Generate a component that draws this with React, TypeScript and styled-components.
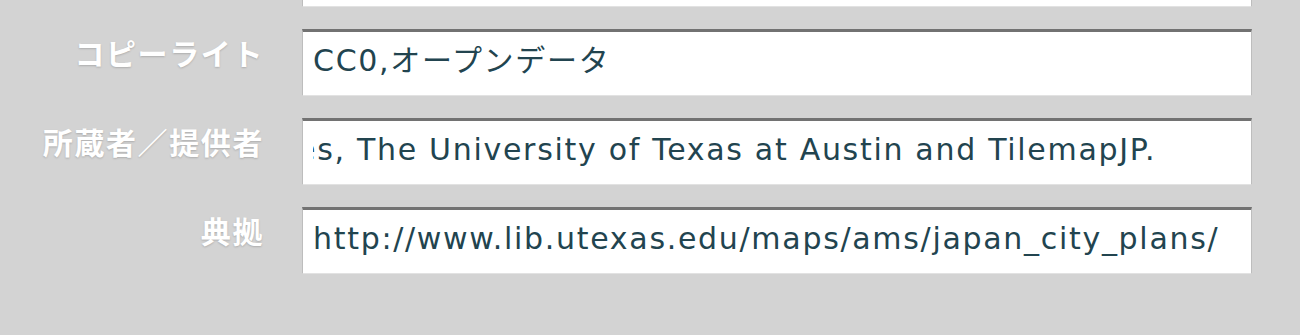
import React from "react";
import styled, { createGlobalStyle } from "styled-components";

const GlobalStyle = createGlobalStyle`
  html, body {
    margin: 0;
    padding: 0;
    background: #d3d3d3;
    overflow: hidden;
  }
  #root {
    width: 1300px;
    height: 335px;
    overflow: hidden;
  }
`;

const Page = styled.div`
  width: 1300px;
  height: 335px;
  background: #d3d3d3;
  overflow: hidden;
`;

const Form = styled.div`
  display: grid;
  grid-template-columns: 264px 950px;
  column-gap: 38px;
  row-gap: 22px;
  margin-top: -60px;
`;

const Label = styled.div`
  text-align: right;
  padding-top: 8px;
  font-family: "Noto Sans CJK JP", "Noto Sans", sans-serif;
  font-weight: 700;
  font-size: 30px;
  line-height: 30px;
  letter-spacing: 1.6px;
  color: #ffffff;
  text-shadow: 0 1px 2px rgba(0, 0, 0, 0.18);
  white-space: nowrap;
`;

const Field = styled.div`
  box-sizing: border-box;
  height: 67px;
  background: #ffffff;
  border-top: 3px solid #727272;
  border-left: 1px solid #bdbdbd;
  border-right: 1px solid #bdbdbd;
  border-bottom: 1px solid #e2e2e2;
  padding: 0 10px 6px 10px;
`;

const Value = styled.div<{ $indent?: number }>`
  overflow: hidden;
  white-space: nowrap;
  font-family: "DejaVu Sans", "Noto Sans CJK JP", sans-serif;
  font-size: 30px;
  line-height: 57px;
  letter-spacing: 1.7px;
  color: #22444f;
  text-indent: ${(p) => (p.$indent ? `${p.$indent}px` : "0")};
`;

const rows: { label: string; value: string; indent?: number }[] = [
  { label: "", value: "" },
  { label: "コピーライト", value: "CC0,オープンデータ" },
  {
    label: "所蔵者／提供者",
    value: "es, The University of Texas at Austin and TilemapJP.",
    indent: -16,
  },
  { label: "典拠", value: "http://www.lib.utexas.edu/maps/ams/japan_city_plans/" },
];

export default function App() {
  return (
    <Page>
      <GlobalStyle />
      <Form>
        {rows.map((r, i) => (
          <React.Fragment key={i}>
            <Label>{r.label}</Label>
            <Field>
              <Value $indent={r.indent}>{r.value}</Value>
            </Field>
          </React.Fragment>
        ))}
      </Form>
    </Page>
  );
}
